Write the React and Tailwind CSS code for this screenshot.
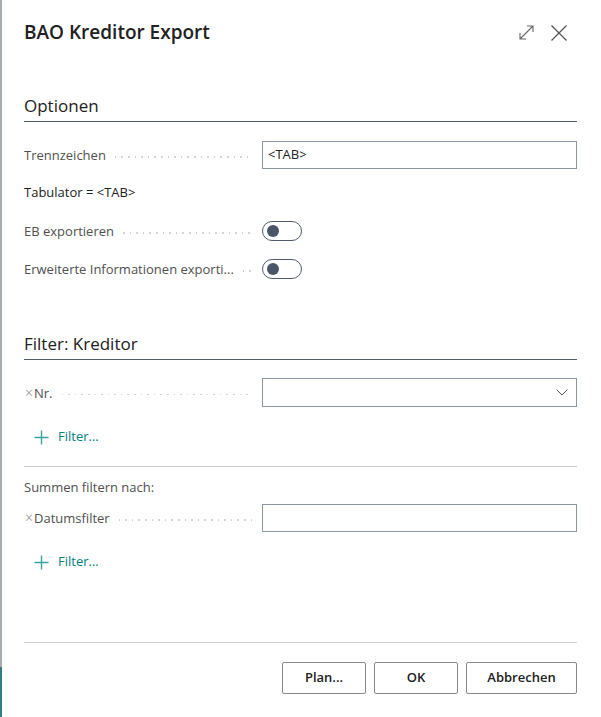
import React from 'react'

const font = { fontFamily: '"Segoe UI", "Open Sans", "Noto Sans", sans-serif' }

const dots = Array.from({ length: 40 })

function Leader() {
  return (
    <span className='flex-1 ml-[9px] mt-[4px] h-[2px] overflow-hidden flex gap-[5px]'>
      {dots.map((_, i) => (
        <span key={i} className='shrink-0 w-[1.6px] h-[1.6px] rounded-full bg-[#c6c6c6]'></span>
      ))}
    </span>
  )
}

function FieldRow({ label, clearable, children, className }) {
  return (
    <div className={`flex items-center ${className}`}>
      <div className='w-[228px] flex items-center text-[13px] text-[#505050] leading-5'>
        {clearable && <span className='text-[#8a8a8a] text-[14px] leading-5 mr-[1px] ml-[1px] font-light'>×</span>}
        <span className='whitespace-nowrap'>{label}</span>
        <Leader />
      </div>
      <div className='ml-[10px] flex-1'>{children}</div>
    </div>
  )
}

function Toggle() {
  return (
    <div className='w-[40px] h-[20px] rounded-full border border-[#505c6d] flex items-center pl-[4px]'>
      <div className='w-[12px] h-[12px] rounded-full bg-[#4a5568]'></div>
    </div>
  )
}

function AddFilter({ className }) {
  return (
    <div className={`flex items-center h-5 pl-[10px] text-[13px] text-[#00807d] ${className}`}>
      <svg width='15' height='15' viewBox='0 0 15 15' className='mr-[9px]'>
        <path d='M7.5 0.5v14M0.5 7.5h14' stroke='#3aa29c' strokeWidth='1.4' fill='none' />
      </svg>
      <span>Filter...</span>
    </div>
  )
}

export default function App() {
  return (
    <div className='w-full h-[717px] bg-white flex' style={font}>
      <div className='w-[2px] flex flex-col'>
        <div className='flex-1 bg-[#a8acae]'></div>
        <div className='h-[50px] bg-[#2f7f80]'></div>
      </div>
      <div className='flex-1 pl-[22px] pr-[24px] flex flex-col'>
        <div className='flex items-center justify-between pt-[18px] h-[46px]'>
          <h1 className='text-[19px] leading-7 font-semibold text-[#212121]'>BAO Kreditor Export</h1>
          <div className='flex items-center gap-[15px] mr-[9px] mt-[1px]'>
            <svg width='17' height='17' viewBox='0 0 17 17'>
              <path d='M2 15L15 2M9 2h6v6M2 9v6h6' stroke='#666' strokeWidth='1.1' fill='none' />
            </svg>
            <svg width='18' height='18' viewBox='0 0 18 18'>
              <path d='M1.5 1.5l15 15M16.5 1.5l-15 15' stroke='#555' strokeWidth='1.3' fill='none' />
            </svg>
          </div>
        </div>

        <div className='mt-[48px] border-b border-[#4f5b67] pb-[3px]'>
          <h2 className='text-[17px] leading-6 text-[#212121]'>Optionen</h2>
        </div>

        <FieldRow label='Trennzeichen' className='mt-[19px]'>
          <div className='h-[28px] border border-[#8a96a3] flex items-center px-[5px] text-[13px] text-[#212121]'>&lt;TAB&gt;</div>
        </FieldRow>

        <div className='mt-[13px] text-[13px] leading-5 text-[#212121]'>Tabulator = &lt;TAB&gt;</div>

        <FieldRow label='EB exportieren' className='mt-[19px] h-5'>
          <Toggle />
        </FieldRow>
        <FieldRow label='Erweiterte Informationen exporti...' className='mt-[18px] h-5'>
          <Toggle />
        </FieldRow>

        <div className='mt-[53px] border-b border-[#4f5b67] pb-[3px]'>
          <h2 className='text-[17px] leading-6 font-medium text-[#212121]'>Filter: Kreditor</h2>
        </div>

        <FieldRow label='Nr.' clearable className='mt-[18px]'>
          <div className='h-[29px] border border-[#8a96a3] flex items-center justify-end pr-[8px]'>
            <svg width='12' height='7' viewBox='0 0 12 7'>
              <path d='M0.5 0.5l5.5 5.5 5.5-5.5' stroke='#555' strokeWidth='1' fill='none' />
            </svg>
          </div>
        </FieldRow>

        <AddFilter className='mt-[20px]' />

        <div className='mt-[19px] h-px bg-[#c8ccd0]'></div>

        <div className='mt-[10px] text-[13px] leading-5 text-[#505050]'>Summen filtern nach:</div>

        <FieldRow label='Datumsfilter' clearable className='mt-[7px]'>
          <div className='h-[28px] border border-[#8a96a3]'></div>
        </FieldRow>

        <AddFilter className='mt-[20px]' />

        <div className='mt-[70px] h-px bg-[#d0d0d0]'></div>

        <div className='mt-[19px] flex justify-end gap-[8px]'>
          <button className='w-[84px] h-[32px] border border-[#8a8886] rounded-[2px] text-[13px] font-semibold text-[#212121]'>Plan...</button>
          <button className='w-[84px] h-[32px] border border-[#8a8886] rounded-[2px] text-[13px] font-semibold text-[#212121]'>OK</button>
          <button className='w-[111px] h-[32px] border border-[#8a8886] rounded-[2px] text-[13px] font-semibold text-[#212121]'>Abbrechen</button>
        </div>
      </div>
    </div>
  )
}
